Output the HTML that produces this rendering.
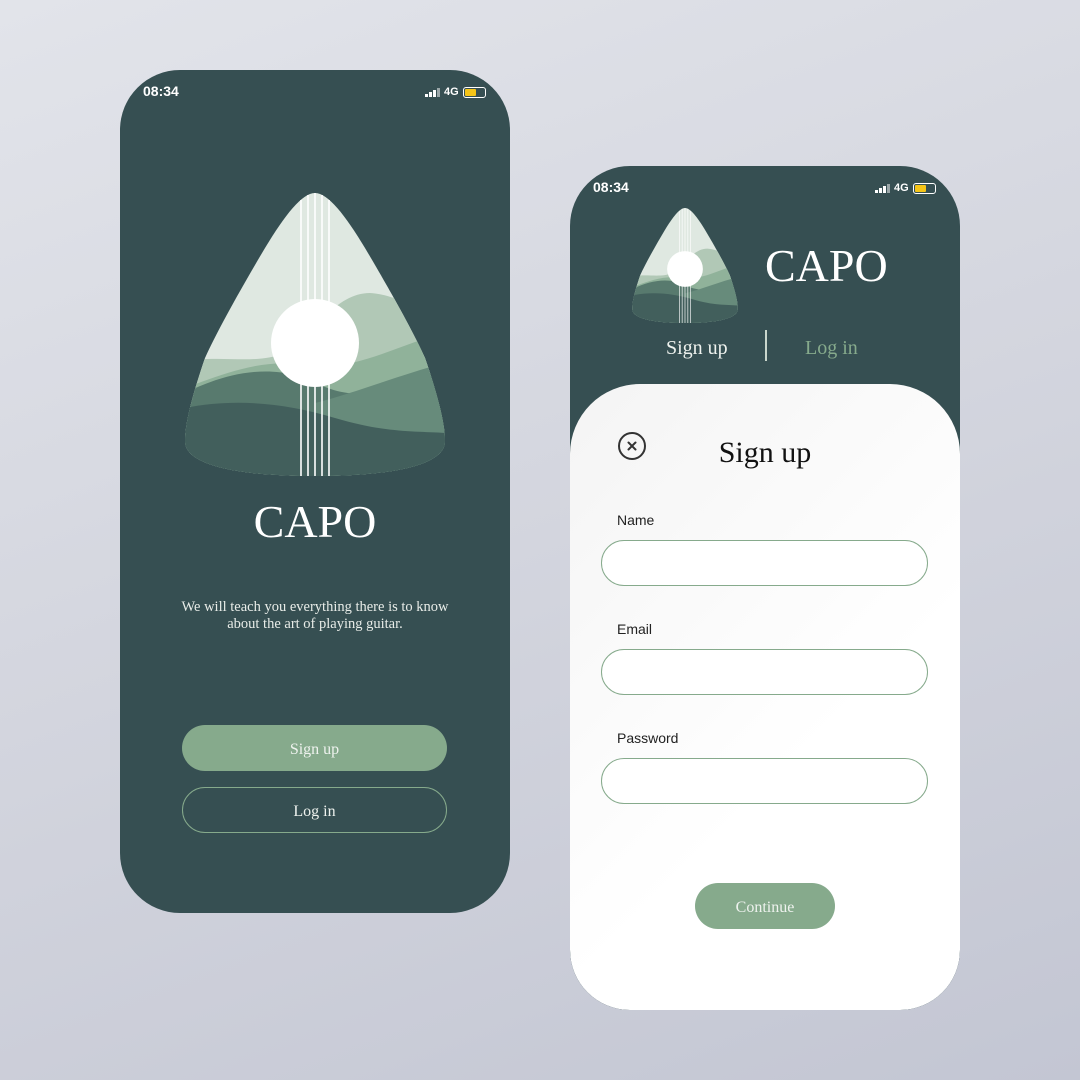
<!DOCTYPE html>
<html><head><meta charset="utf-8"><style>
*{margin:0;padding:0;box-sizing:border-box}
body{width:1080px;height:1080px;overflow:hidden;background:linear-gradient(160deg,#e2e4ea 0%,#d3d5de 50%,#c3c6d3 100%);font-family:"Liberation Serif",serif;position:relative}
.ph{position:absolute;width:390px;background:#364f52;border-radius:60px;overflow:hidden}
.abs{position:absolute}
.time{position:absolute;font:bold 14px "Liberation Sans",sans-serif;color:#fff}
.st{position:absolute;display:flex;align-items:center;gap:4px;color:#fff;font:bold 11px "Liberation Sans",sans-serif}
.bars{display:flex;align-items:flex-end;gap:1px;height:9px}
.bars i{display:block;width:3px;background:#fff}
.bat{width:23px;height:11px;border:1.5px solid #fff;border-radius:3px;padding:1px;position:relative}
.bat b{display:block;width:11px;height:100%;background:#f5c518;border-radius:1px}
.btn{position:absolute;border-radius:23px;text-align:center;color:#eef2ee;font-size:16px}
.lbl{position:absolute;left:47px;font:14px "Liberation Sans",sans-serif;color:#222}
.inp{position:absolute;left:31px;width:327px;height:46px;border:1px solid #86aa8c;border-radius:23px;background:#fff}
</style></head><body>
<svg width="0" height="0" style="position:absolute"><defs>
<clipPath id="pk"><path d="M130,0 C143,0 160,22 180,55 C202,92 228,138 240,165 C252,200 260,230 260,248 C260,274 200,283 130,283 C60,283 0,274 0,248 C0,230 8,200 20,165 C32,138 58,92 80,55 C100,22 117,0 130,0Z"/></clipPath>
<g id="logo">
<g clip-path="url(#pk)">
<rect width="260" height="283" fill="#dfe8e1"/>
<path d="M0,168 C40,162 70,172 100,160 C130,140 150,100 185,100 C215,102 240,120 260,135 L260,283 L0,283Z" fill="#b1c8b6"/>
<path d="M0,195 C40,180 80,165 120,172 C170,180 215,150 260,140 L260,283 L0,283Z" fill="#90b29a"/>
<path d="M0,200 C30,185 70,172 110,182 C140,192 150,205 200,200 C225,196 245,182 260,175 L260,283 L0,283Z" fill="#587a6e"/>
<path d="M130,210 C170,200 220,180 260,170 L260,283 L130,283Z" fill="#678b7b"/>
<path d="M0,215 C50,205 100,210 150,225 C200,240 230,238 260,240 L260,283 L0,283Z" fill="#425f5c"/>
</g>
<g stroke="#fff" stroke-width="1.6">
<line x1="116" y1="7" x2="116" y2="283"/><line x1="123" y1="2" x2="123" y2="283"/><line x1="130" y1="0" x2="130" y2="283"/><line x1="137" y1="2" x2="137" y2="283"/><line x1="144" y1="7" x2="144" y2="283"/>
</g>
<circle cx="130" cy="150" r="44" fill="#fff"/>
</g>
</defs></svg>

<div class="ph" style="left:120px;top:70px;height:843px">
  <div class="time" style="left:23px;top:13px">08:34</div>
  <div class="st" style="left:305px;top:16px"><span class="bars"><i style="height:3px"></i><i style="height:5px"></i><i style="height:7px"></i><i style="height:9px;opacity:.5"></i></span>4G<span class="bat"><b></b></span></div>
  <svg class="abs" style="left:65px;top:123px" width="260" height="283"><use href="#logo"/></svg>
  <div class="abs" style="left:0;width:390px;top:425px;text-align:center;color:#fff;font-size:46px">CAPO</div>
  <div class="abs" style="left:0;width:390px;top:529px;text-align:center;color:#e8ece8;font-size:14.5px;line-height:17px">We will teach you everything there is to know<br>about the art of playing guitar.</div>
  <div class="btn" style="left:62px;top:655px;width:265px;height:46px;line-height:50px;background:#86aa8c">Sign up</div>
  <div class="btn" style="left:62px;top:717px;width:265px;height:46px;line-height:48px;border:1px solid #86aa8c">Log in</div>
</div>

<div class="ph" style="left:570px;top:166px;height:844px">
  <div class="time" style="left:23px;top:13px">08:34</div>
  <div class="st" style="left:305px;top:16px"><span class="bars"><i style="height:3px"></i><i style="height:5px"></i><i style="height:7px"></i><i style="height:9px;opacity:.5"></i></span>4G<span class="bat"><b></b></span></div>
  <svg class="abs" style="left:62px;top:42px" width="106" height="115" viewBox="0 0 260 283"><use href="#logo"/></svg>
  <div class="abs" style="left:195px;top:73px;color:#fff;font-size:46px">CAPO</div>
  <div class="abs" style="left:96px;top:171px;color:#eef2ee;font-size:20px">Sign up</div>
  <div class="abs" style="left:195px;top:164px;width:2px;height:31px;background:#c9d6cc"></div>
  <div class="abs" style="left:235px;top:171px;color:#86aa8c;font-size:20px">Log in</div>
  <div class="abs" style="left:0;top:218px;width:390px;height:626px;background:linear-gradient(135deg,#f4f4f4,#fff 60%);border-radius:70px 70px 60px 60px">
    <svg class="abs" style="left:47px;top:48px" width="30" height="30" viewBox="0 0 30 30"><circle cx="15" cy="14" r="13" fill="none" stroke="#333" stroke-width="2"/><path d="M11.5,10.5 L18.5,17.5 M18.5,10.5 L11.5,17.5" stroke="#333" stroke-width="2" stroke-linecap="round"/></svg>
    <div class="abs" style="left:0;width:390px;top:52px;text-align:center;color:#111;font-size:30px">Sign up</div>
  </div>
  <div class="lbl" style="top:346px">Name</div>
  <div class="inp" style="top:374px"></div>
  <div class="lbl" style="top:455px">Email</div>
  <div class="inp" style="top:483px"></div>
  <div class="lbl" style="top:564px">Password</div>
  <div class="inp" style="top:592px"></div>
  <div class="btn" style="left:125px;top:717px;width:140px;height:46px;line-height:50px;background:#86aa8c">Continue</div>
</div>
</body></html>
